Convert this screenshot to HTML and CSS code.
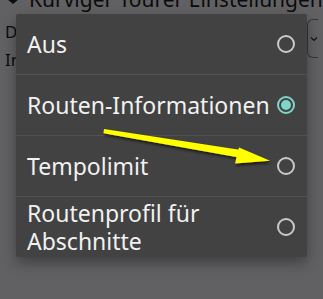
FILE: index.html
```html
<!DOCTYPE html>
<html>
<head>
<meta charset="utf-8">
<link rel="stylesheet" href="styles.css">
</head>
<body>
<div class="page">
  <div class="header">
    <svg class="hicon" width="14" height="14" viewBox="0 0 14 14"><path d="M1 0 L13 0 L13 7 L7 12 L1 7 Z" fill="#1f1f1f"/></svg>
    <span>Kurviger Tourer Einstellungen</span>
  </div>
  <div class="setting">
    <div class="labels">
      <div class="l1">Darstellung</div>
      <div class="l2">Informationen</div>
    </div>
    <div class="select"><svg width="8" height="6" viewBox="0 0 8 6"><path d="M1 1.5 L4 4.5 L7 1.5" fill="none" stroke="#2a2a2a" stroke-width="1.2"/></svg></div>
  </div>
</div>
<div class="scrim"></div>
<div class="menu">
  <div class="item"><span class="label">Aus</span><span class="radio"></span></div>
  <div class="item"><span class="label">Routen-Informationen</span><span class="radio on"></span></div>
  <div class="item"><span class="label">Tempolimit</span><span class="radio"></span></div>
  <div class="item"><span class="label">Routenprofil für<br>Abschnitte</span><span class="radio"></span></div>
</div>
<svg class="arrow" width="323" height="299" viewBox="0 0 323 299">
  <defs>
    <filter id="sh" x="-10%" y="-50%" width="120%" height="200%">
      <feDropShadow dx="1" dy="2" stdDeviation="1.5" flood-color="#000" flood-opacity="0.7"/>
    </filter>
  </defs>
  <g filter="url(#sh)" fill="#ffff00">
    <polygon points="104,129 241,150 239,157.5 103.5,133.3"/>
    <polygon points="239,147.5 270,160.7 235,163.5"/>
  </g>
</svg>
</body>
</html>
```
FILE: styles.css
```css
html, body {
  margin: 0;
  padding: 0;
}
body {
  width: 323px;
  height: 299px;
  overflow: hidden;
  position: relative;
  background: #f2f3f7;
  font-family: "Noto Sans", sans-serif;
}
.page {
  padding: 0 5px 0 0;
}
.header {
  display: flex;
  align-items: center;
  gap: 9px;
  height: 12px;
  overflow: visible;
  margin-top: -7px;
  padding-left: 6px;
  font-size: 21px;
  color: #1e1f22;
  white-space: nowrap;
}
.header .hicon {
  flex: none;
}
.setting {
  display: flex;
  justify-content: space-between;
  margin-top: 13px;
  padding-left: 5px;
}
.labels {
  font-size: 17px;
  line-height: 28px;
  color: #1e1f22;
}
.select {
  width: 11px;
  height: 39px;
  border: 1px solid #888;
  border-right: none;
  border-radius: 6px 0 0 6px;
  margin-top: 1px;
  display: flex;
  align-items: center;
  justify-content: flex-end;
  box-sizing: border-box;
}
.scrim {
  position: absolute;
  inset: 0;
  background: rgba(0, 0, 0, 0.6);
}
.menu {
  position: absolute;
  left: 16px;
  top: 14px;
  width: 291px;
  background: #424242;
  box-shadow: 0 6px 14px rgba(0, 0, 0, 0.35);
  border-radius: 2px;
}
.item {
  display: flex;
  align-items: center;
  justify-content: space-between;
  height: 60px;
  padding: 0 12px 0 11px;
  border-top: 1px solid #525252;
  color: #f1f1f1;
  font-size: 23px;
  line-height: 28px;
}
.item:first-child {
  border-top: none;
}
.radio {
  flex: none;
  width: 18px;
  height: 18px;
  box-sizing: border-box;
  border: 2px solid #c9c9c9;
  border-radius: 50%;
  position: relative;
}
.radio.on {
  border-color: #80d4c8;
}
.radio.on::after {
  content: "";
  position: absolute;
  left: 2px;
  top: 2px;
  width: 10px;
  height: 10px;
  border-radius: 50%;
  background: #80d4c8;
}
.arrow {
  position: absolute;
  left: 0;
  top: 0;
}
```
